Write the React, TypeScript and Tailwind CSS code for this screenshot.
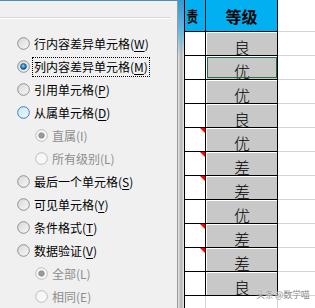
import React, { useId } from "react";

type RadioKind = "normal" | "checked" | "hover" | "disabled" | "disabledChecked";

function Radio({ kind }: { kind: RadioKind }) {
  const id = useId().replace(/:/g, "");
  const ring =
    kind === "hover" ? "#3c7fb1" : kind.startsWith("disabled") ? "#bcbcbc" : "#8e8f8f";
  const from = kind === "hover" ? "#c8e8f9" : kind.startsWith("disabled") ? "#f4f4f4" : "#d8d8d8";
  const to = kind === "hover" ? "#eef8fe" : kind.startsWith("disabled") ? "#fbfbfb" : "#f8f8f8";
  return (
    <svg width="13" height="13" viewBox="0 0 13 13" className="shrink-0">
      <defs>
        <linearGradient id={`f${id}`} x1="0" y1="0" x2="1" y2="1">
          <stop offset="0" stopColor={from} />
          <stop offset="1" stopColor={to} />
        </linearGradient>
        <radialGradient id={`d${id}`} cx="0.45" cy="0.4" r="0.6">
          <stop offset="0" stopColor="#8fdcff" />
          <stop offset="0.5" stopColor="#2a8ad4" />
          <stop offset="1" stopColor="#0d4a86" />
        </radialGradient>
      </defs>
      <circle cx="6.5" cy="6.5" r="5.8" fill={`url(#f${id})`} stroke={ring} strokeWidth="1" />
      {kind === "checked" && <circle cx="6.5" cy="6.5" r="3" fill={`url(#d${id})`} stroke="#1a4f7a" strokeWidth="0.6" />}
      {kind === "disabledChecked" && <circle cx="6.5" cy="6.5" r="2.8" fill="#9a9a9a" stroke="#7e7e7e" strokeWidth="0.6" />}
    </svg>
  );
}

type Opt = { label: string; key: string; kind: RadioKind; sub?: boolean; focus?: boolean };

const options: Opt[] = [
  { label: "行内容差异单元格", key: "W", kind: "normal" },
  { label: "列内容差异单元格", key: "M", kind: "checked", focus: true },
  { label: "引用单元格", key: "P", kind: "normal" },
  { label: "从属单元格", key: "D", kind: "hover" },
  { label: "直属", key: "I", kind: "disabledChecked", sub: true },
  { label: "所有级别", key: "L", kind: "disabled", sub: true },
  { label: "最后一个单元格", key: "S", kind: "normal" },
  { label: "可见单元格", key: "Y", kind: "normal" },
  { label: "条件格式", key: "T", kind: "normal" },
  { label: "数据验证", key: "V", kind: "normal" },
  { label: "全部", key: "L", kind: "disabledChecked", sub: true },
  { label: "相同", key: "E", kind: "disabled", sub: true },
];

const grades = ["良", "优", "优", "良", "优", "差", "差", "优", "差", "差", "良"];
const flagged = [4, 5, 6, 8, 9];

function Dialog() {
  return (
    <div className="w-[178px] shrink-0 h-full bg-[#f0f0f0] border-r border-[#9a9a9a] border-t border-t-[#4f8db0] flex flex-col">
      <div className="w-[170px] mt-[16px] border-b border-[#d5d5d5] h-0" />
      <div className="w-[170px] border-b border-white h-0" />
      <div className="mt-[13px] flex flex-col">
        {options.map((o, i) => {
          const disabled = o.kind.startsWith("disabled");
          return (
            <div
              key={i}
              className={`h-[23px] flex items-center ${o.sub ? "pl-[35px]" : "pl-[17px]"}`}
            >
              <Radio kind={o.kind} />
              <span
                className={`text-[12px] leading-none whitespace-nowrap ${
                  o.focus ? "ml-[2px] px-[1px] h-[20px] flex items-center border border-dotted border-black" : "ml-[4px]"
                } ${disabled ? "text-[#8d8d8d]" : "text-black"}`}
              >
                {o.label}(
                {disabled ? o.key : <span className="underline underline-offset-2">{o.key}</span>})
              </span>
            </div>
          );
        })}
      </div>
    </div>
  );
}

function Sheet() {
  return (
    <div className="flex-1 h-full flex flex-col bg-white">
      <div className="flex h-[32px] shrink-0">
        <div className="w-[22px] border-l border-r border-b border-black bg-[#00b0f0] flex items-center justify-end pr-[7px]">
          <span className="text-[15px] font-bold leading-none scale-x-75 origin-right">责</span>
        </div>
        <div className="w-[72px] border-r border-b border-black bg-[#00b0f0] flex items-center justify-center">
          <span className="text-[16px] font-bold leading-none">等级</span>
        </div>
        <div className="flex-1 border-b border-[#d4d4d4]" />
      </div>
      {grades.map((g, i) => (
        <div key={i} className="flex h-[24px] shrink-0">
          <div className="w-[22px] border-l border-r border-b border-black relative">
            {flagged.includes(i) && (
              <svg width="5" height="5" className="absolute top-0 right-0">
                <polygon points="0,0 5,0 5,5" fill="#ff0000" />
              </svg>
            )}
          </div>
          <div className="w-[72px] border-r border-b border-black relative">
            <div className="h-full border-t border-l border-white bg-[#c8c8c8] flex items-end justify-center text-[16px] font-light leading-none text-black">
              {g}
            </div>
            {i === 1 && (
              <div className="absolute left-[1px] top-[1px] right-0 bottom-[1px] border border-[#217346]" />
            )}
          </div>
          <div className="flex-1 border-b border-[#d4d4d4]" />
        </div>
      ))}
      <div className="flex flex-1">
        <div className="w-[22px] border-l border-black border-r border-r-[#d4d4d4]" />
        <div className="w-[72px] border-r border-[#d4d4d4]" />
        <div className="flex-1" />
      </div>
    </div>
  );
}

export default function App() {
  return (
    <div className="w-[315px] h-[308px] overflow-hidden flex bg-white relative font-['Noto_Sans_CJK_SC',sans-serif]">
      <Dialog />
      <div className="w-[6px] shrink-0 h-full bg-[linear-gradient(to_bottom,#2e9ad6,#6cb8e0_32px,rgba(200,210,215,0)_56px),linear-gradient(to_right,#e4e4e4,#b4b4b4_55%,#ececec)]" />
      <Sheet />
      <div className="absolute left-[256px] top-[290px] text-[9px] leading-none text-[#8a8a8a] whitespace-nowrap tracking-[-0.3px] [text-shadow:0_0_2px_#fff,0_0_1px_#fff]">
        头条 @数学喵
      </div>
    </div>
  );
}
